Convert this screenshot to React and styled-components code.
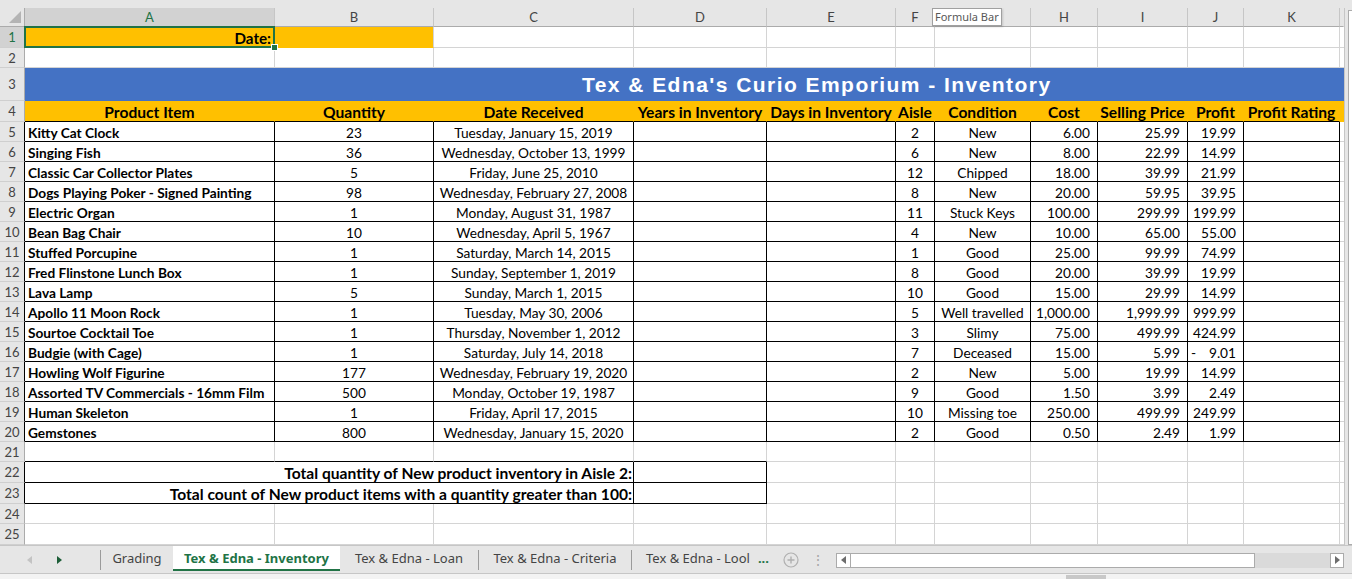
import React from 'react';
import styled, { createGlobalStyle } from 'styled-components';

const GRID = '#d4d4d4';
const BLACK = '#000';
const YELLOW = '#ffc000';
const BLUE = '#4472c4';
const GREEN = '#217346';
const HEAD_BG = '#e6e6e6';
const COLS = '25px 250px 159px 200px 133px 129px 39px 96px 67px 90px 56px 96px 4px';
const LETTERS = ['A', 'B', 'C', 'D', 'E', 'F', 'G', 'H', 'I', 'J', 'K', ''];

const Global = createGlobalStyle`
  html, body { margin: 0; padding: 0; height: 579px; overflow: hidden; background: ${HEAD_BG}; }
  body { font-family: Lato, "Liberation Sans", sans-serif; }
  #root { height: 579px; }
`;

const Window = styled.div`
  width: 1352px;
  height: 579px;
  display: flex;
  flex-direction: column;
  background: ${HEAD_BG};
`;

const TopStrip = styled.div`
  height: 8px;
  flex: none;
`;

const SheetArea = styled.div`
  display: flex;
  height: 537px;
  flex: none;
`;

const Grid = styled.div`
  width: 1344px;
  display: flex;
  flex-direction: column;
  background: #fff;
  overflow: hidden;
`;

const VScroll = styled.div`
  width: 8px;
  box-sizing: border-box;
  padding: 2px 0 0 3px;
  border-left: 1px solid #c6c6c6;
  display: flex;
  flex-direction: column;
`;

const VScrollBox = styled.div`
  flex: 1;
  background: #fff;
  border: 1px solid #ababab;
  border-right: 0;
  box-sizing: border-box;
`;

const Row = styled.div`
  display: grid;
  grid-template-columns: ${COLS};
  height: ${p => p.$h}px;
  flex: none;
`;

const Corner = styled.div`
  box-sizing: border-box;
  background: ${HEAD_BG};
  border-right: 1px solid #ababab;
  border-bottom: 1px solid #ababab;
  display: flex;
  align-items: flex-end;
  justify-content: flex-end;
  padding: 0 3px 3px 0;
`;

const ColHead = styled.div`
  position: relative;
  box-sizing: border-box;
  background: ${p => (p.$sel ? '#d2d2d2' : HEAD_BG)};
  color: ${p => (p.$sel ? GREEN : '#444')};
  border-right: 1px solid ${p => (p.$last ? 'transparent' : '#c6c6c6')};
  border-bottom: 1px solid #ababab;
  display: flex;
  align-items: center;
  justify-content: center;
  font-size: 13px;
`;

const Tooltip = styled.div`
  position: absolute;
  left: -3px;
  top: 0;
  height: 18px;
  box-sizing: border-box;
  padding: 0 2px;
  background: #fff;
  border: 1px solid #a0a0a0;
  box-shadow: 1px 1px 2px rgba(0, 0, 0, 0.15);
  color: #575757;
  font-family: "Noto Sans", "Open Sans", sans-serif;
  font-size: 11px;
  line-height: 16px;
  white-space: nowrap;
  z-index: 3;
`;

const RowHead = styled.div`
  box-sizing: border-box;
  background: ${p => (p.$sel ? '#d2d2d2' : HEAD_BG)};
  color: ${p => (p.$sel ? GREEN : '#444')};
  border-right: 1px solid ${p => p.$r || '#ababab'};
  border-bottom: 1px solid #cfcfcf;
  display: flex;
  align-items: center;
  justify-content: center;
  font-size: 13px;
`;

const JUSTIFY = { left: 'flex-start', center: 'center', right: 'flex-end', between: 'space-between' };

const Cell = styled.div`
  position: relative;
  box-sizing: border-box;
  display: flex;
  align-items: center;
  justify-content: ${p => JUSTIFY[p.$align || 'left']};
  padding: 1px ${p => p.$pr ?? 3}px 0 ${p => p.$pl ?? 3}px;
  background: ${p => p.$bg || '#fff'};
  border-right: 1px solid ${p => p.$r || GRID};
  border-bottom: 1px solid ${p => p.$b || GRID};
  grid-column: ${p => (p.$span ? `span ${p.$span}` : 'auto')};
  font-weight: ${p => (p.$bold ? 700 : 400)};
  font-size: ${p => p.$fs || 13.7}px;
  color: #000;
  white-space: nowrap;
`;

const Title = styled.div`
  grid-column: span 12;
  background: ${BLUE};
  color: #fff;
  display: flex;
  align-items: center;
  padding-left: 557px;
  font-family: "Liberation Sans", Arial, sans-serif;
  font-weight: 700;
  font-size: 21px;
  letter-spacing: 1.45px;
  white-space: nowrap;
`;

const Selection = styled.div`
  position: absolute;
  left: -1px;
  top: -1px;
  right: -1px;
  bottom: -1px;
  border: 2px solid ${GREEN};
  pointer-events: none;
  z-index: 2;
`;

const Handle = styled.div`
  position: absolute;
  right: -3px;
  bottom: -3px;
  width: 5px;
  height: 5px;
  background: ${GREEN};
  box-shadow: 0 0 0 1px #fff;
  z-index: 3;
`;

/* Sheet tabs */
const TabBar = styled.div`
  height: 28px;
  flex: none;
  box-sizing: border-box;
  border-top: 1px solid #c6c6c6;
  display: flex;
  align-items: stretch;
  font-family: "Noto Sans", "Open Sans", sans-serif;
  font-size: 13px;
  color: #444;
`;

const Nav = styled.div`
  width: 100px;
  display: flex;
  align-items: center;
  padding-left: 27px;
  gap: 25px;
  box-sizing: border-box;
`;

const Sep = styled.div`
  width: 1px;
  background: #9b9b9b;
  margin: 4px 0 3px;
`;

const Tab = styled.div`
  width: ${p => p.$w}px;
  box-sizing: border-box;
  display: flex;
  align-items: center;
  justify-content: ${p => (p.$start ? 'flex-start' : 'center')};
  padding-left: ${p => (p.$start ? '14px' : '0')};
  margin-bottom: 2px;
  background: ${p => (p.$active ? '#fff' : 'transparent')};
  color: ${p => (p.$active ? GREEN : '#444')};
  font-weight: ${p => (p.$active ? 700 : 400)};
  border-bottom: 2px solid ${p => (p.$active ? GREEN : 'transparent')};
  white-space: nowrap;
  overflow: hidden;
`;

const More = styled.span`
  color: ${GREEN};
  font-weight: 700;
  margin-left: 8px;
`;

const IconSlot = styled.div`
  width: ${p => p.$w}px;
  display: flex;
  align-items: center;
  justify-content: center;
  color: #a6a6a6;
  font-size: 14px;
`;

const HScroll = styled.div`
  width: 508px;
  height: 15px;
  align-self: center;
  margin-top: 1px;
  display: flex;
  box-sizing: border-box;
`;

const ScrollBtn = styled.div`
  width: ${p => p.$w}px;
  box-sizing: border-box;
  background: #fff;
  border: 1px solid #ababab;
  display: flex;
  align-items: center;
  justify-content: center;
`;

const Thumb = styled.div`
  width: 404px;
  box-sizing: border-box;
  background: #fff;
  border: 1px solid #ababab;
  border-left: 0;
`;

const Track = styled.div`
  flex: 1;
  background: #dadada;
`;

const StatusBar = styled.div`
  flex: 1;
  background: #f3f3f3;
  border-top: 1px solid #c6c6c6;
  display: flex;
  align-items: flex-start;
  padding-left: 1066px;
`;

const ViewBtn = styled.div`
  width: 40px;
  height: 6px;
  margin-top: 1px;
  background: ${p => (p.$sel ? '#c8c8c8' : 'transparent')};
  display: flex;
  justify-content: center;
  align-items: flex-end;
`;

const ViewIcon = styled.div`
  width: 14px;
  height: 2px;
  background: ${p => p.$c};
`;

const Tri = ({ dir, color }) => (
  <svg width="5" height="8" viewBox="0 0 5 8">
    <path d={dir === 'left' ? 'M5 0 L0 4 L5 8 Z' : 'M0 0 L5 4 L0 8 Z'} fill={color} />
  </svg>
);

const items = [
  ['Kitty Cat Clock', '23', 'Tuesday, January 15, 2019', '2', 'New', '6.00', '25.99', '19.99'],
  ['Singing Fish', '36', 'Wednesday, October 13, 1999', '6', 'New', '8.00', '22.99', '14.99'],
  ['Classic Car Collector Plates', '5', 'Friday, June 25, 2010', '12', 'Chipped', '18.00', '39.99', '21.99'],
  ['Dogs Playing Poker - Signed Painting', '98', 'Wednesday, February 27, 2008', '8', 'New', '20.00', '59.95', '39.95'],
  ['Electric Organ', '1', 'Monday, August 31, 1987', '11', 'Stuck Keys', '100.00', '299.99', '199.99'],
  ['Bean Bag Chair', '10', 'Wednesday, April 5, 1967', '4', 'New', '10.00', '65.00', '55.00'],
  ['Stuffed Porcupine', '1', 'Saturday, March 14, 2015', '1', 'Good', '25.00', '99.99', '74.99'],
  ['Fred Flinstone Lunch Box', '1', 'Sunday, September 1, 2019', '8', 'Good', '20.00', '39.99', '19.99'],
  ['Lava Lamp', '5', 'Sunday, March 1, 2015', '10', 'Good', '15.00', '29.99', '14.99'],
  ['Apollo 11 Moon Rock', '1', 'Tuesday, May 30, 2006', '5', 'Well travelled', '1,000.00', '1,999.99', '999.99'],
  ['Sourtoe Cocktail Toe', '1', 'Thursday, November 1, 2012', '3', 'Slimy', '75.00', '499.99', '424.99'],
  ['Budgie (with Cage)', '1', 'Saturday, July 14, 2018', '7', 'Deceased', '15.00', '5.99', '-9.01'],
  ['Howling Wolf Figurine', '177', 'Wednesday, February 19, 2020', '2', 'New', '5.00', '19.99', '14.99'],
  ['Assorted TV Commercials - 16mm Film', '500', 'Monday, October 19, 1987', '9', 'Good', '1.50', '3.99', '2.49'],
  ['Human Skeleton', '1', 'Friday, April 17, 2015', '10', 'Missing toe', '250.00', '499.99', '249.99'],
  ['Gemstones', '800', 'Wednesday, January 15, 2020', '2', 'Good', '0.50', '2.49', '1.99'],
];

const headers = [
  'Product Item', 'Quantity', 'Date Received', 'Years in Inventory', 'Days in Inventory',
  'Aisle', 'Condition', 'Cost', 'Selling Price', 'Profit', 'Profit Rating',
];

const Blank = ({ n }) => Array.from({ length: n }, (_, i) => <Cell key={`b${i}`} />);

const DataRow = ({ num, item }) => {
  const [name, qty, date, aisle, cond, cost, price, profit] = item;
  const neg = profit.startsWith('-');
  const b = { $r: BLACK, $b: BLACK };
  return (
    <Row $h={20}>
      <RowHead $r={BLACK}>{num}</RowHead>
      <Cell {...b} $bold>{name}</Cell>
      <Cell {...b} $align="center">{qty}</Cell>
      <Cell {...b} $align="center">{date}</Cell>
      <Cell {...b} />
      <Cell {...b} />
      <Cell {...b} $align="center">{aisle}</Cell>
      <Cell {...b} $align="center">{cond}</Cell>
      <Cell {...b} $align="right" $pr={7}>{cost}</Cell>
      <Cell {...b} $align="right" $pr={7}>{price}</Cell>
      <Cell {...b} $align={neg ? 'between' : 'right'} $pr={7} $pl={3}>
        {neg ? (<><span>-</span><span>{profit.slice(1)}</span></>) : profit}
      </Cell>
      <Cell {...b} />
      <Cell />
    </Row>
  );
};

const TotalRow = ({ num, label }) => (
  <Row $h={21}>
    <RowHead $r={BLACK}>{num}</RowHead>
    <Cell $span={3} $r={BLACK} $b={BLACK} $align="right" $pr={1} $fs={15.6} $bold>{label}</Cell>
    <Cell $r={BLACK} $b={BLACK} />
    <Blank n={8} />
  </Row>
);

export default function App() {
  return (
    <Window>
      <Global />
      <TopStrip />
      <SheetArea>
        <Grid>
          <Row $h={19}>
            <Corner>
              <svg width="12" height="12" viewBox="0 0 12 12">
                <path d="M12 0 L12 12 L0 12 Z" fill="#b4b4b4" />
              </svg>
            </Corner>
            {LETTERS.map((l, i) => (
              <ColHead key={i} $sel={l === 'A'} $last={l === ''}>
                {l === 'G' ? <Tooltip>Formula Bar</Tooltip> : l}
              </ColHead>
            ))}
          </Row>

          <Row $h={21}>
            <RowHead $sel>1</RowHead>
            <Cell $bg={YELLOW} $r="transparent" $b="transparent" $align="right" $pr={3} $fs={15.2} $bold>
              Date:
              <Selection />
              <Handle />
            </Cell>
            <Cell $bg={YELLOW} $b="transparent" />
            <Blank n={10} />
          </Row>

          <Row $h={20}>
            <RowHead>2</RowHead>
            <Blank n={12} />
          </Row>

          <Row $h={33}>
            <RowHead>3</RowHead>
            <Title>Tex &amp; Edna's Curio Emporium - Inventory</Title>
          </Row>

          <Row $h={21}>
            <RowHead>4</RowHead>
            {headers.map(h => (
              <Cell key={h} $bg={YELLOW} $r="transparent" $b={BLACK} $align="center" $pl={0} $pr={0} $fs={15.6} $bold>
                {h}
              </Cell>
            ))}
            <Cell $bg={YELLOW} $r="transparent" $b="transparent" />
          </Row>

          {items.map((it, i) => (
            <DataRow key={i} num={i + 5} item={it} />
          ))}

          <Row $h={20}>
            <RowHead>21</RowHead>
            <Cell $b={BLACK} />
            <Cell $b={BLACK} />
            <Cell $b={BLACK} />
            <Cell $b={BLACK} />
            <Blank n={8} />
          </Row>

          <TotalRow num={22} label="Total quantity of New product inventory in Aisle 2:" />
          <TotalRow num={23} label="Total count of New product items with a quantity greater than 100:" />

          <Row $h={20}>
            <RowHead>24</RowHead>
            <Blank n={12} />
          </Row>
          <Row $h={21}>
            <RowHead>25</RowHead>
            <Blank n={12} />
          </Row>
        </Grid>
        <VScroll>
          <VScrollBox />
        </VScroll>
      </SheetArea>

      <TabBar>
        <Nav>
          <Tri dir="left" color="#c3c3c3" />
          <Tri dir="right" color="#1d5e38" />
        </Nav>
        <Sep />
        <Tab $w={72}>Grading</Tab>
        <Tab $w={167} $active>Tex &amp; Edna - Inventory</Tab>
        <Tab $w={138}>Tex &amp; Edna - Loan</Tab>
        <Sep />
        <Tab $w={152}>Tex &amp; Edna - Criteria</Tab>
        <Sep />
        <Tab $w={149} $start>
          Tex &amp; Edna - Lool<More>...</More>
        </Tab>
        <IconSlot $w={19}>
          <svg width="16" height="16" viewBox="0 0 16 16">
            <circle cx="8" cy="8" r="7" fill="none" stroke="#b0b0b0" strokeWidth="1.2" />
            <path d="M8 4.5 V11.5 M4.5 8 H11.5" stroke="#b0b0b0" strokeWidth="1.4" />
          </svg>
        </IconSlot>
        <IconSlot $w={36}>⋮</IconSlot>
        <HScroll>
          <ScrollBtn $w={15}><Tri dir="left" color="#6d6d6d" /></ScrollBtn>
          <Thumb />
          <Track />
          <ScrollBtn $w={14}><Tri dir="right" color="#6d6d6d" /></ScrollBtn>
        </HScroll>
      </TabBar>

      <StatusBar>
        <ViewBtn $sel><ViewIcon $c="#262626" /></ViewBtn>
        <ViewBtn><ViewIcon $c="#444" /></ViewBtn>
        <ViewBtn><ViewIcon $c="#b0b0b0" /></ViewBtn>
      </StatusBar>
    </Window>
  );
}
